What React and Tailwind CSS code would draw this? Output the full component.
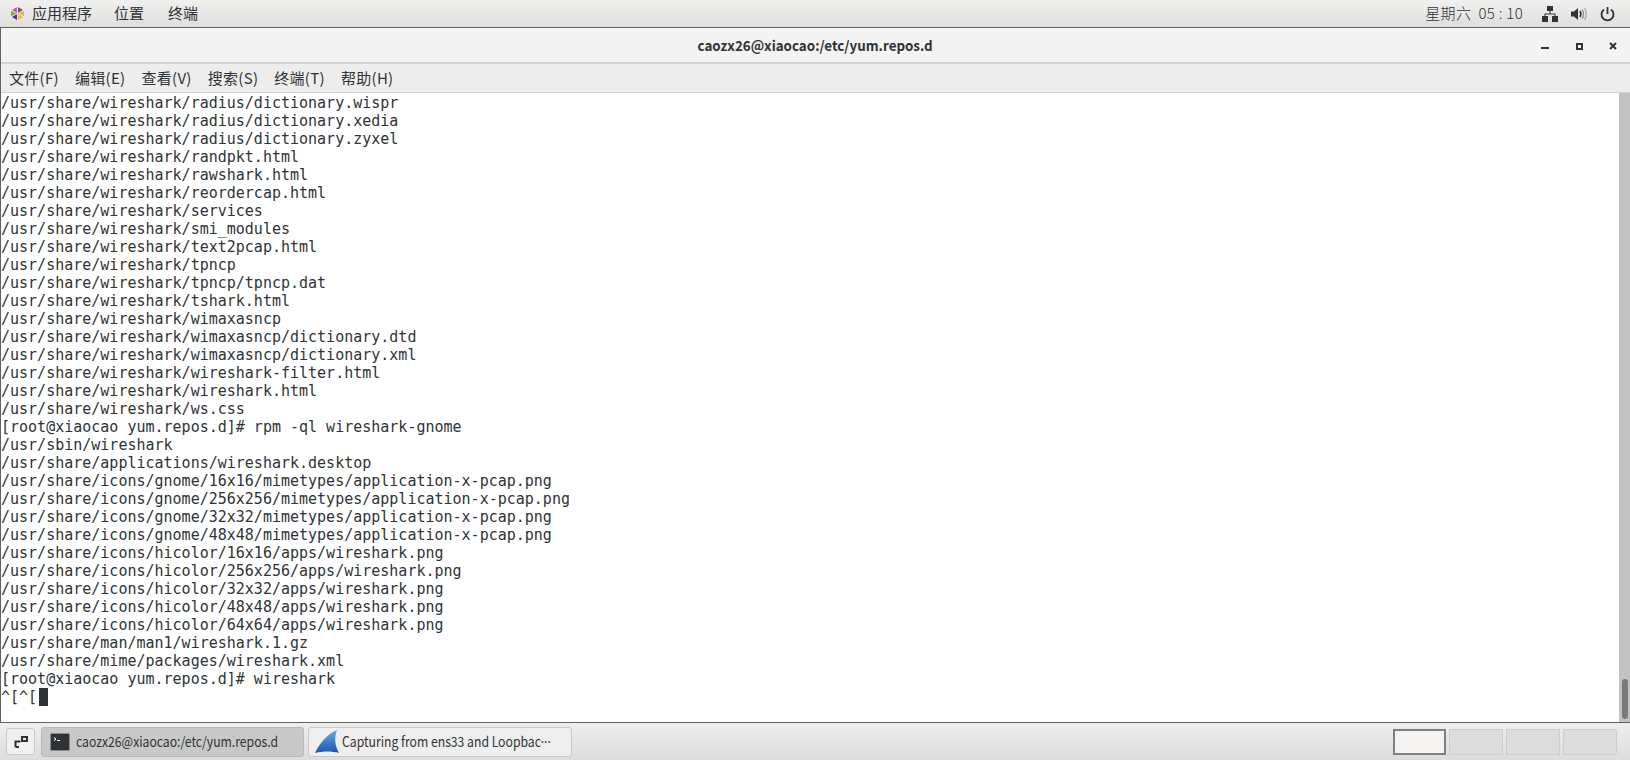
import React from 'react';

const lines = [
    '/usr/share/wireshark/radius/dictionary.wispr',
    '/usr/share/wireshark/radius/dictionary.xedia',
    '/usr/share/wireshark/radius/dictionary.zyxel',
    '/usr/share/wireshark/randpkt.html',
    '/usr/share/wireshark/rawshark.html',
    '/usr/share/wireshark/reordercap.html',
    '/usr/share/wireshark/services',
    '/usr/share/wireshark/smi_modules',
    '/usr/share/wireshark/text2pcap.html',
    '/usr/share/wireshark/tpncp',
    '/usr/share/wireshark/tpncp/tpncp.dat',
    '/usr/share/wireshark/tshark.html',
    '/usr/share/wireshark/wimaxasncp',
    '/usr/share/wireshark/wimaxasncp/dictionary.dtd',
    '/usr/share/wireshark/wimaxasncp/dictionary.xml',
    '/usr/share/wireshark/wireshark-filter.html',
    '/usr/share/wireshark/wireshark.html',
    '/usr/share/wireshark/ws.css',
    '[root@xiaocao yum.repos.d]# rpm -ql wireshark-gnome',
    '/usr/sbin/wireshark',
    '/usr/share/applications/wireshark.desktop',
    '/usr/share/icons/gnome/16x16/mimetypes/application-x-pcap.png',
    '/usr/share/icons/gnome/256x256/mimetypes/application-x-pcap.png',
    '/usr/share/icons/gnome/32x32/mimetypes/application-x-pcap.png',
    '/usr/share/icons/gnome/48x48/mimetypes/application-x-pcap.png',
    '/usr/share/icons/hicolor/16x16/apps/wireshark.png',
    '/usr/share/icons/hicolor/256x256/apps/wireshark.png',
    '/usr/share/icons/hicolor/32x32/apps/wireshark.png',
    '/usr/share/icons/hicolor/48x48/apps/wireshark.png',
    '/usr/share/icons/hicolor/64x64/apps/wireshark.png',
    '/usr/share/man/man1/wireshark.1.gz',
    '/usr/share/mime/packages/wireshark.xml',
    '[root@xiaocao yum.repos.d]# wireshark',
];

const menuItems = ['文件(F)', '编辑(E)', '查看(V)', '搜索(S)', '终端(T)', '帮助(H)'];

function AppsLogo() {
    return (
        <svg width="15" height="15" viewBox="0 0 15 15">
            <path d="M7 1 L7 7 L2 4 Z" fill="#c25a9a" />
            <path d="M8 1 L13 4 L8 7 Z" fill="#8a3f8f" />
            <path d="M1 5 L6.500 7.500 L1 10 Z" fill="#7fa83a" />
            <path d="M14 5 L14 10 L8.500 7.500 Z" fill="#e8b23a" />
            <path d="M7 8 L7 14 L2 11 Z" fill="#3a3a8f" />
            <path d="M8 8 L13 11 L8 14 Z" fill="#e8c23a" />
        </svg>
    );
}

function NetworkIcon() {
    return (
        <svg width="16" height="16" viewBox="0 0 16 16" fill="#2e3436">
            <rect x="5" y="0" width="6" height="5" />
            <rect x="0" y="10" width="6" height="6" />
            <rect x="10" y="10" width="6" height="6" />
            <path d="M7.500 5h1v2.500H13.500v2.500h-1V8.500H3.500v1.500h-1V7.500H7.500z" />
        </svg>
    );
}

function VolumeIcon() {
    return (
        <svg width="16" height="16" viewBox="0 0 16 16" fill="none">
            <path d="M0 5.500h3L7 2v12L3 10.500H0z" fill="#2e3436" />
            <path d="M9 5c1 1.800 1 4.200 0 6" stroke="#2e3436" strokeWidth="1.600" />
            <path d="M11.200 3.500c1.500 2.700 1.500 6.300 0 9" stroke="#8f9192" strokeWidth="1.400" />
            <path d="M13.600 2c2 3.600 2 8.400 0 12" stroke="#a9abac" strokeWidth="1.400" />
        </svg>
    );
}

function PowerIcon() {
    return (
        <svg width="15" height="16" viewBox="0 0 15 16" fill="none" stroke="#2e3436" strokeWidth="1.800">
            <path d="M7.500 1v7" />
            <path d="M4 3.500a6 6 0 1 0 7 0" />
        </svg>
    );
}

function TopBar() {
    return (
        <div className="flex h-[28px] items-center justify-between border-b border-[#5f6162] bg-gradient-to-b from-[#f0f0ef] to-[#dededd] text-[15px] text-[#2e3436]">
            <div className="flex items-center">
                <div className="ml-[10px] mr-[7px] flex">
                    <AppsLogo />
                </div>
                <span>应用程序</span>
                <span className="ml-[22px]">位置</span>
                <span className="ml-[24px]">终端</span>
            </div>
            <div className="flex items-center">
                <span className="font-light whitespace-pre tracking-[0.3px]">星期六  05 : 10</span>
                <div className="ml-[19px] flex items-center gap-[13px] pr-[15px]">
                    <NetworkIcon />
                    <VolumeIcon />
                    <PowerIcon />
                </div>
            </div>
        </div>
    );
}

function TitleBar() {
    return (
        <div className="relative flex h-[36px] items-center justify-center border-b-2 border-[#cfcfcd] bg-[#f3f3f3] text-[14px] font-bold text-[#2e3436]">
            <span className="scale-x-[0.955]">caozx26@xiaocao:/etc/yum.repos.d</span>
            <div className="absolute right-[8px] top-[7px] flex items-center">
                <svg width="16" height="16" viewBox="0 0 16 16">
                    <rect x="3" y="12" width="8" height="2" fill="#2e3436" />
                </svg>
                <svg width="16" height="16" viewBox="0 0 16 16" fill="none" stroke="#2e3436" strokeWidth="2" className="ml-[19px]">
                    <rect x="4" y="9" width="5" height="5" />
                </svg>
                <svg width="16" height="16" viewBox="0 0 16 16" fill="none" stroke="#2e3436" strokeWidth="2" className="ml-[17px]">
                    <path d="M4 8l6 6M10 8l-6 6" />
                </svg>
            </div>
        </div>
    );
}

function MenuBar() {
    return (
        <div className="flex h-[29px] items-center gap-[16px] border-b border-[#d3d3d2] bg-[#ededed] pl-[8px] text-[15px] tracking-[0.3px] text-[#2e3436]">
            {menuItems.map((item) => (
                <span key={item}>{item}</span>
            ))}
        </div>
    );
}

function Terminal() {
    return (
        <div className="flex min-h-0 flex-1 bg-white">
            <div className="flex-1 pt-[1px] text-[15px] leading-[18px] whitespace-pre text-[#2e3436] [font-family:'DejaVu_Sans_Mono',monospace]">
                {lines.map((line, index) => (
                    <div key={index}>{line}</div>
                ))}
                <div className="flex items-center">
                    <span>^[^[</span>
                    <span className="ml-[2px] h-[18px] w-[9px] bg-[#2e3436]" />
                </div>
            </div>
            <div className="flex w-[11px] flex-col justify-end bg-[#c2c2c2] pb-[3px] pl-[3px] pr-[2px]">
                <div className="h-[40px] rounded-full bg-[#787c7c]" />
            </div>
        </div>
    );
}

function TaskBar() {
    return (
        <div className="flex h-[38px] items-center border-t border-[#5f6162] bg-gradient-to-b from-[#eeeeee] to-[#dcdcdc] text-[14px] text-[#2e3436]">
            <div className="ml-[6px] flex h-[27px] w-[29px] items-center justify-center rounded-[3px] border border-[#c8c8c8] bg-[#f0f0f0]">
                <svg width="14" height="13" viewBox="0 0 14 13" fill="none" stroke="#2e3436" strokeWidth="2">
                    <rect x="8" y="2" width="5" height="4" />
                    <path d="M1.500 12V6.500H6.500M1.500 12H5" />
                </svg>
            </div>
            <div className="ml-[6px] flex h-[30px] w-[263px] items-center rounded-[3px] border border-[#b9b9b9] bg-[#c8c8c8] pl-[8px]">
                <svg width="20" height="18" viewBox="0 0 20 18" className="shrink-0">
                    <rect x="0.500" y="0.500" width="19" height="17" rx="1" fill="#2e3436" stroke="#8a8c8c" />
                    <path d="M4 4.500l2 1.500-2 1.500" stroke="#fff" fill="none" />
                    <rect x="7" y="7" width="3" height="1" fill="#fff" />
                </svg>
                <span className="ml-[6px] origin-left scale-x-[0.87] whitespace-nowrap">caozx26@xiaocao:/etc/yum.repos.d</span>
            </div>
            <div className="ml-[4px] flex h-[30px] w-[264px] items-center rounded-[3px] border border-[#c8c8c8] bg-[#eeeeee] pl-[6px]">
                <svg width="24" height="24" viewBox="0 0 24 24" className="shrink-0">
                    <defs>
                        <linearGradient id="fin" x1="0" y1="0" x2="0" y2="1">
                            <stop offset="0" stopColor="#6aa9ea" />
                            <stop offset="1" stopColor="#1a56b0" />
                        </linearGradient>
                    </defs>
                    <path d="M22 0C14 3 5 12 0 23C8 21 17 21 24 23C20 16 19 8 22 0z" fill="url(#fin)" />
                </svg>
                <span className="ml-[3px] origin-left scale-x-[0.87] whitespace-nowrap">
                    Capturing from ens33 and Loopbac<span className="[font-family:'Noto_Sans',sans-serif]">···</span>
                </span>
            </div>
            <div className="ml-auto mr-[13px] flex gap-[3px]">
                <div className="h-[26px] w-[53px] border-[2px] border-[#808080] bg-[#f5f4f2]" />
                <div className="h-[26px] w-[54px] border border-[#cdcdcd] bg-[#dcdcdc]" />
                <div className="h-[26px] w-[54px] border border-[#cdcdcd] bg-[#dcdcdc]" />
                <div className="h-[26px] w-[54px] rounded-r-[3px] border border-[#cdcdcd] bg-[#dcdcdc]" />
            </div>
        </div>
    );
}

export default function App() {
    return (
        <div className="flex h-[760px] w-[1630px] flex-col overflow-hidden [font-family:'Noto_Sans_CJK_SC',sans-serif]">
            <TopBar />
            <div className="flex min-h-0 flex-1 flex-col border-l border-[#5f6162]">
                <TitleBar />
                <MenuBar />
                <Terminal />
            </div>
            <TaskBar />
        </div>
    );
}
